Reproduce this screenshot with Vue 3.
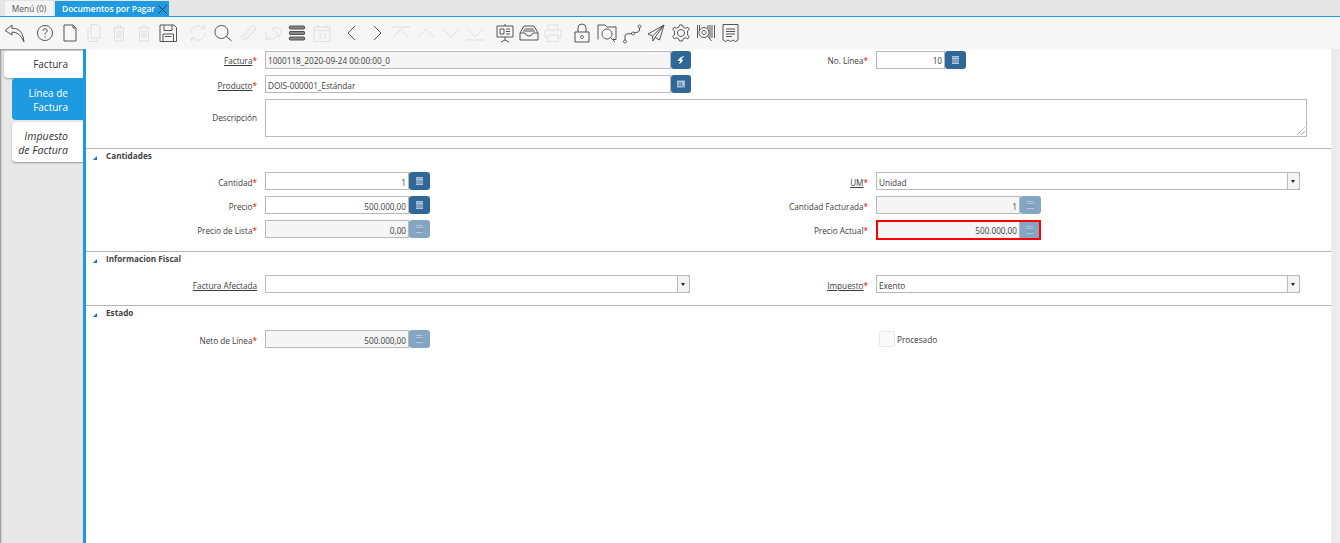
<template>
  <div class="app">
    <div class="tabbar">
      <div class="tab">Menú (0)</div>
      <div class="tab tab--active">
        Documentos por Pagar
        <svg class="tab-close" viewBox="0 0 12 12"><path d="M1.5 1.5 L10.5 10.5 M10.5 1.5 L1.5 10.5" /></svg>
      </div>
    </div>

    <div class="toolbar">
      <div class="tool-group" v-for="(group, g) in toolGroups" :key="g">
        <svg
          v-for="tool in group"
          :key="tool.name"
          class="tool"
          :class="{ 'tool--off': tool.off }"
          viewBox="0 0 24 24"
        >
          <path v-if="tool.fill" class="tool-fill" :d="tool.fill" />
          <path :d="tool.d" />
        </svg>
      </div>
    </div>

    <div class="main">
      <div class="side">
        <div class="side-tab side-tab--first">Factura</div>
        <div class="side-tab side-tab--current">Línea de<br />Factura</div>
        <div class="side-tab side-tab--child">Impuesto<br />de Factura</div>
      </div>

      <div class="content">
        <div class="section section--top">
          <div class="rows">
            <div class="field field--high">
              <span class="label"><u>Factura</u><i>*</i></span>
              <div class="input input--off w-406">1000118_2020-09-24 00:00:00_0</div>
              <button class="btn w-20">
                <svg viewBox="0 0 12 12"><path class="btn-solid" d="M9.5 2 Q5 2.5 2.5 7 H5.2 L4 10 Q7.5 8.5 8 5.5 H6 Q7 3.5 9.5 2 Z" /></svg>
              </button>
            </div>
            <div class="field field--high">
              <span class="label">No. Línea<i>*</i></span>
              <div class="input input--num w-68">10</div>
              <button class="btn"><span class="calc"></span></button>
            </div>
            <div class="field field--full">
              <span class="label"><u>Producto</u><i>*</i></span>
              <div class="input w-406">DOIS-000001_Estándar</div>
              <button class="btn w-20">
                <svg viewBox="0 0 12 12"><path class="btn-pale" d="M2 2.5 H10 V9.5 H2 Z" /><path class="btn-line" d="M4 5 H6.5 V7.5 H4 Z M7.5 7.5 L9 9" /></svg>
              </button>
            </div>
            <div class="field field--full">
              <span class="label label--tall">Descripción</span>
              <div class="input textarea">
                <svg class="grip" viewBox="0 0 8 8"><path d="M0 8 L8 0 M4 8 L8 4" /></svg>
              </div>
            </div>
          </div>
        </div>

        <div class="section section--cant">
          <div class="section-head"><span class="arrow"></span>Cantidades</div>
          <div class="rows">
            <div class="field">
              <span class="label">Cantidad<i>*</i></span>
              <div class="input input--num w-144">1</div>
              <button class="btn"><span class="calc"></span></button>
            </div>
            <div class="field">
              <span class="label"><u>UM</u><i>*</i></span>
              <div class="input combo w-424">Unidad<span class="combo-btn"></span></div>
            </div>
            <div class="field">
              <span class="label">Precio<i>*</i></span>
              <div class="input input--num w-144">500.000,00</div>
              <button class="btn"><span class="calc"></span></button>
            </div>
            <div class="field">
              <span class="label">Cantidad Facturada<i>*</i></span>
              <div class="input input--num input--off w-144">1</div>
              <button class="btn btn--off"><span class="calc"></span></button>
            </div>
            <div class="field">
              <span class="label">Precio de Lista<i>*</i></span>
              <div class="input input--num input--off w-144">0,00</div>
              <button class="btn btn--off"><span class="calc"></span></button>
            </div>
            <div class="field">
              <span class="label">Precio Actual<i>*</i></span>
              <div class="error-box">
                <div class="input input--num input--off input--bare">500.000,00</div>
                <button class="btn btn--off btn--bare"><span class="calc"></span></button>
              </div>
            </div>
          </div>
        </div>

        <div class="section">
          <div class="section-head"><span class="arrow"></span>Informacion Fiscal</div>
          <div class="rows">
            <div class="field">
              <span class="label"><u>Factura Afectada</u></span>
              <div class="input combo w-425"><span class="combo-btn"></span></div>
            </div>
            <div class="field">
              <span class="label"><u>Impuesto</u><i>*</i></span>
              <div class="input combo w-424">Exento<span class="combo-btn"></span></div>
            </div>
          </div>
        </div>

        <div class="section section--last">
          <div class="section-head section-head--tall"><span class="arrow"></span>Estado</div>
          <div class="rows">
            <div class="field">
              <span class="label">Neto de Línea<i>*</i></span>
              <div class="input input--num input--off w-144">500.000,00</div>
              <button class="btn btn--off"><span class="calc"></span></button>
            </div>
            <div class="field">
              <span class="label"></span>
              <span class="check"></span>
              <span class="check-text">Procesado</span>
            </div>
          </div>
        </div>
      </div>

      <div class="scroll"></div>
    </div>
  </div>
</template>

<script setup>
// iconos de la barra, agrupados igual que en la ventana
const toolGroups = [
  [
    { name: 'undo', d: 'M9 4 L2 9.5 L9 14 V11 Q17 11 21 21 Q20 10 14 8 Q11.5 7 9 7.5 Z' }
  ],
  [
    { name: 'help', d: 'M12 4.5 A7.5 7.5 0 1 1 11.99 4.5 M9.8 10 Q10 7.8 12.2 7.8 Q14.4 8 14.2 10 Q14 11.2 12.2 12.2 V13.6 M12.2 15.2 V16.4' },
    { name: 'new', d: 'M6 4 H15 L18 7 V20 H6 Z M15 4 V7 H18' },
    { name: 'copy', off: true, d: 'M9 3.5 H15 L18 6.5 V17 H9 Z M6 7 V20.5 H15 V17' },
    { name: 'delete', off: true, d: 'M6 7 H18 M10 7 V4.5 H14 V7 M7.5 7 V20 H16.5 V7 M10 9.5 V17.5 M12 9.5 V17.5 M14 9.5 V17.5' },
    { name: 'deleteAll', off: true, d: 'M6 7 H18 M10 7 V4.5 H14 V7 M7.5 7 V20 H16.5 V7 M10 9.5 V17.5 M12 9.5 V17.5 M14 9.5 V17.5' },
    { name: 'save', d: 'M4 4 H18 L20.5 6.5 V20.5 H4 Z M8 4 V9.5 H16 V4 M7 20.5 V13 H17.5 V20.5 M9 15.5 H15.5' }
  ],
  [
    { name: 'refresh', off: true, d: 'M5 12 A7.5 7.5 0 0 1 18 7 M19 12 A7.5 7.5 0 0 1 6 17 M18.5 3.5 V7.5 H14.5 M5.5 20.5 V16.5 H9.5' },
    { name: 'find', d: 'M10.5 4.5 A6.5 6.5 0 1 1 10.49 4.5 M15.2 15.2 L20.5 20' },
    { name: 'attach', off: true, d: 'M20 8 L10.5 18 Q8 20 6 18.5 Q4.5 16.5 6.5 14.5 L15 5.5 Q17 4 18.5 5.2 Q20 7 18.5 9 L11 17 Q9.5 18 8.5 17 Q8 16 9 15 L15.5 8' },
    { name: 'chat', off: true, d: 'M10 9 A5.5 4.5 0 1 1 8.5 17.5 L4.5 19 L6 15.5 Q4 13 5 11 M11 8 A5 4 0 0 1 20 10 Q20 13 18 14 L19 16 L16 15' },
    { name: 'list', fill: 'M4 5 H20 V8 H4 Z M4 10.5 H20 V13.5 H4 Z M4 16 H20 V19 H4 Z', d: 'M5 5 H19 Q20.5 6.5 19 8 H5 Q3.5 6.5 5 5 Z M5 10.5 H19 Q20.5 12 19 13.5 H5 Q3.5 12 5 10.5 Z M5 16 H19 Q20.5 17.5 19 19 H5 Q3.5 17.5 5 16 Z' },
    { name: 'calendar', off: true, d: 'M4 6 H20 V20.5 H4 Z M4 9.5 H20 M8 3.5 V7 M16 3.5 V7 M9 13 H11.5 L10 15 Q12 15.5 11 17.5 H9 M14 13.5 L15 13 V18' }
  ],
  [
    { name: 'prev', d: 'M15 5 L8 12 L15 19' },
    { name: 'next', d: 'M9 5 L16 12 L9 19' },
    { name: 'first', off: true, d: 'M3 6 H21 M4 17 L12 8 L20 17' },
    { name: 'up', off: true, d: 'M4 16 L12 8 L20 16' },
    { name: 'down', off: true, d: 'M4 8 L12 16 L20 8' },
    { name: 'last', off: true, d: 'M3 19 H21 M4 7 L12 16 L20 7' }
  ],
  [
    { name: 'report', d: 'M12 3 V5 M4 5 H20 V16 H4 Z M12 16 V19 M8 21 L12 19 L16 21 M7 8 H11 V13 H7 Z M13 8 H17 M13 10.5 H17 M13 13 H17' },
    { name: 'archive', d: 'M7 5 H17 L21 12 V19 H3 V12 Z M3 12 H8 Q9 15 12 15 Q15 15 16 12 H21 M7.5 8 H16.5 M6 10 H18' },
    { name: 'print', off: true, d: 'M7 9 V4 H17 V9 M4 9 H20 V17 H17 M7 17 H4 V9 M7 14 H17 V20.5 H7 Z' }
  ],
  [
    { name: 'lock', d: 'M5 11 H19 V21 H5 Z M8 11 V7 Q8 3 12 3 Q16 3 16 7 V11 M12 14.5 A1.5 1.5 0 1 1 11.99 14.5' },
    { name: 'zoomAcross', d: 'M3 18.5 V4 H10 L12 6 H21 V18.5 H17 M12 8 A5 5 0 1 1 11.99 8 M15.5 16.5 L20 21' },
    { name: 'route', d: 'M5 19 V15 Q5 13.5 7 13 L12 12.5 M14 12 L18 11 Q19.5 10.5 19.5 9 V7 M5 19 A1.5 1.5 0 1 0 5.01 19 M13 11 A1.5 1.5 0 1 0 13.01 11 M19.5 4 A1.5 1.5 0 1 0 19.51 4' },
    { name: 'send', d: 'M20 4 L4 13 L8.5 15 L20 4 L11 16.5 L15.5 19 Z M8.5 15 L9 20 L11 16.5' },
    { name: 'gear', d: 'M10.5 4 H13.5 L14.3 6.3 L16.7 7.2 L18.8 6.2 L20.2 8.4 L18.6 10 V14 L20.2 15.6 L18.8 17.8 L16.7 16.8 L14.3 17.7 L13.5 20 H10.5 L9.7 17.7 L7.3 16.8 L5.2 17.8 L3.8 15.6 L5.4 14 V10 L3.8 8.4 L5.2 6.2 L7.3 7.2 L9.7 6.3 Z M12 8.5 A3.5 3.5 0 1 1 11.99 8.5' },
    { name: 'barcode', d: 'M3.5 4 V17 M5.5 4 V9 M14 4 V8 M16 4 V17 M18 4 V17 M20.5 4 V17 M10 6.5 A5 5 0 1 1 9.99 6.5 M10 9.5 A2 2 0 1 1 9.99 9.5 M13.5 15 L17.5 20' },
    { name: 'doc', d: 'M5 3.5 H20 V19 L17.5 20.5 L15 19 L12.5 20.5 L10 19 L7.5 20.5 L5 19 Z M8 8 H17 M8 10.5 H17 M8 13 H17 M8 15.5 H14' }
  ]
]
</script>

<style>
html,
body {
  margin: 0;
  background: #fff;
}
</style>

<style scoped>
.app {
  width: 1340px;
  height: 543px;
  overflow: hidden;
  display: flex;
  flex-direction: column;
  font-family: "Open Sans", "Noto Sans", sans-serif;
  font-size: 8.2px;
  color: #333;
}

.tabbar {
  height: 16px;
  flex: none;
  display: flex;
  gap: 2px;
  padding: 1px 0 0 5px;
  box-sizing: border-box;
  background: #e6e6e6;
}

.tab {
  width: 48px;
  height: 15px;
  line-height: 15px;
  text-align: center;
  font-size: 8.4px;
  background: #f5f5f5;
  color: #555;
}

.tab--active {
  width: 114px;
  position: relative;
  padding-right: 7px;
  box-sizing: border-box;
  background: #1e9ae0;
  color: #fff;
  font-weight: 600;
}

.tab-close {
  position: absolute;
  right: 1px;
  top: 3px;
  width: 11px;
  height: 11px;
  fill: none;
  stroke: #234;
  stroke-width: 1;
}

.toolbar {
  flex: none;
  height: 33px;
  display: flex;
  gap: 6px;
  padding-left: 3px;
  align-items: center;
  box-sizing: border-box;
  border-top: 1px solid #1e9ae0;
  background: #f6f6f6;
}

.tool-group {
  display: flex;
  gap: 0.7px;
}

.tool-group:nth-child(5) {
  gap: 0;
}

.tool-group:nth-child(6) {
  margin-left: -1px;
}

.tool {
  width: 24px;
  height: 24px;
  fill: none;
  stroke: #4c4c4c;
  stroke-width: 0.95;
}

.tool--off {
  stroke: #dedede;
}

.tool-fill {
  fill: #888;
  stroke: none;
}

.main {
  flex: 1;
  display: flex;
  min-height: 0;
}

.side {
  width: 83px;
  flex: none;
  box-sizing: border-box;
  padding-top: 2px;
  display: flex;
  flex-direction: column;
  align-items: flex-end;
  background: #e8e8e8;
  box-shadow: inset 2px 2px 2px -1px #8a8a8a;
  font-size: 10px;
  line-height: 14px;
  text-align: right;
}

.side-tab {
  width: 71px;
  padding-right: 15px;
  box-sizing: border-box;
  border-radius: 4px 0 0 4px;
  background: #fff;
}

.side-tab--first {
  width: 79px;
  height: 27px;
  line-height: 26px;
  box-shadow: 0 1px 2px #999;
}

.side-tab--current {
  height: 42px;
  padding-top: 8px;
  background: #1e9ae0;
  color: #fff;
}

.side-tab--child {
  height: 40px;
  margin-top: 2px;
  padding-top: 7px;
  font-size: 10.6px;
  font-style: italic;
  box-shadow: 0 1px 2px #999;
}

.content {
  flex: 1;
  min-width: 0;
  padding-top: 2px;
  border-left: 3px solid #1e9ae0;
  background: #fff;
}

.scroll {
  width: 9px;
  flex: none;
  background: #ececec;
}

.section {
  border-top: 1px solid #b5b5b5;
  padding-bottom: 12px;
}

.section--top {
  border-top: 0;
  padding-bottom: 11px;
}

.section--cant {
  padding-bottom: 11px;
}

.section-head {
  position: relative;
  height: 23px;
  padding-left: 20px;
  line-height: 14px;
  font-weight: 700;
  color: #444;
}

.section-head--tall {
  height: 24px;
}

.arrow {
  position: absolute;
  left: 7px;
  top: 7px;
  width: 0;
  height: 0;
  border-left: 4px solid transparent;
  border-bottom: 4px solid #1b6fc0;
}

.rows {
  display: grid;
  grid-template-columns: 611px 1fr;
  row-gap: 6px;
}

.field {
  display: flex;
  align-items: flex-start;
}

.field--full {
  grid-column: 1 / -1;
}

.label {
  width: 171px;
  height: 18px;
  flex: none;
  margin-right: 8px;
  text-align: right;
  line-height: 21px;
  color: #3c3c3c;
}

.field--high .label {
  line-height: 19px;
}

.label--tall {
  height: 38px;
  line-height: 37px;
}

.label u {
  text-underline-offset: 1px;
}

.label i {
  color: #e00;
  font-style: normal;
}

.input {
  height: 18px;
  line-height: 19px;
  padding: 0 2px;
  box-sizing: border-box;
  border: 1px solid #b9b9b9;
  background: #fff;
  color: #3c3c3c;
  white-space: nowrap;
}

.field--high .input {
  line-height: 17px;
}

.input--num {
  text-align: right;
}

.input--off {
  background: #f5f5f5;
}

.w-406 { width: 406px; }
.w-68 { width: 69px; }
.w-144 { width: 144px; }
.w-424 { width: 424px; }
.w-425 { width: 425px; }

.input--bare {
  width: 142px;
  height: 16px;
  line-height: 17px;
  border-width: 0 1px 0 0;
}

.textarea {
  position: relative;
  width: 1042px;
  height: 38px;
}

.grip {
  position: absolute;
  right: 1px;
  bottom: 1px;
  width: 8px;
  height: 8px;
  fill: none;
  stroke: #666;
  stroke-width: 0.8;
  stroke-dasharray: 1 0.6;
}

.combo {
  position: relative;
}

.combo-btn {
  position: absolute;
  right: -1px;
  top: -1px;
  width: 13px;
  height: 18px;
  box-sizing: border-box;
  border: 1px solid #b9b9b9;
  border-radius: 0 3px 3px 0;
  background: #f4f4f4;
}

.combo-btn::after {
  content: '';
  position: absolute;
  left: 3px;
  top: 7px;
  width: 0;
  height: 0;
  border: 2.5px solid transparent;
  border-top: 3px solid #222;
  border-bottom: 0;
}

.btn {
  width: 21px;
  height: 18px;
  flex: none;
  padding: 0;
  display: flex;
  align-items: center;
  justify-content: center;
  border: 0;
  border-radius: 3px;
  background: #2f6798;
}

.btn svg {
  width: 12px;
  height: 12px;
}

.btn-solid {
  fill: #fff;
}

.btn-pale {
  fill: #a7c0d6;
}

.btn-line {
  fill: none;
  stroke: #4f7ea6;
}

.w-20 {
  width: 20px;
}

.btn--off {
  background: #85a6c2;
}

.btn--bare {
  width: 19px;
  height: 16px;
  border-radius: 0;
}

.calc {
  width: 7px;
  height: 8px;
  background: linear-gradient(#b4c8da 0 1px, #7e9fbd 1px 2px, #b4c8da 2px 3px, #7e9fbd 3px 7px, #b4c8da 7px);
}

.error-box {
  display: flex;
  border: 2px solid #f00;
}

.check {
  width: 16px;
  height: 16px;
  margin: 1px 2px 0 3px;
  box-sizing: border-box;
  border: 1px solid #e8e8e8;
  border-radius: 2px;
  background: #fafafa;
}

.check-text {
  line-height: 19px;
  color: #3c3c3c;
}
</style>
